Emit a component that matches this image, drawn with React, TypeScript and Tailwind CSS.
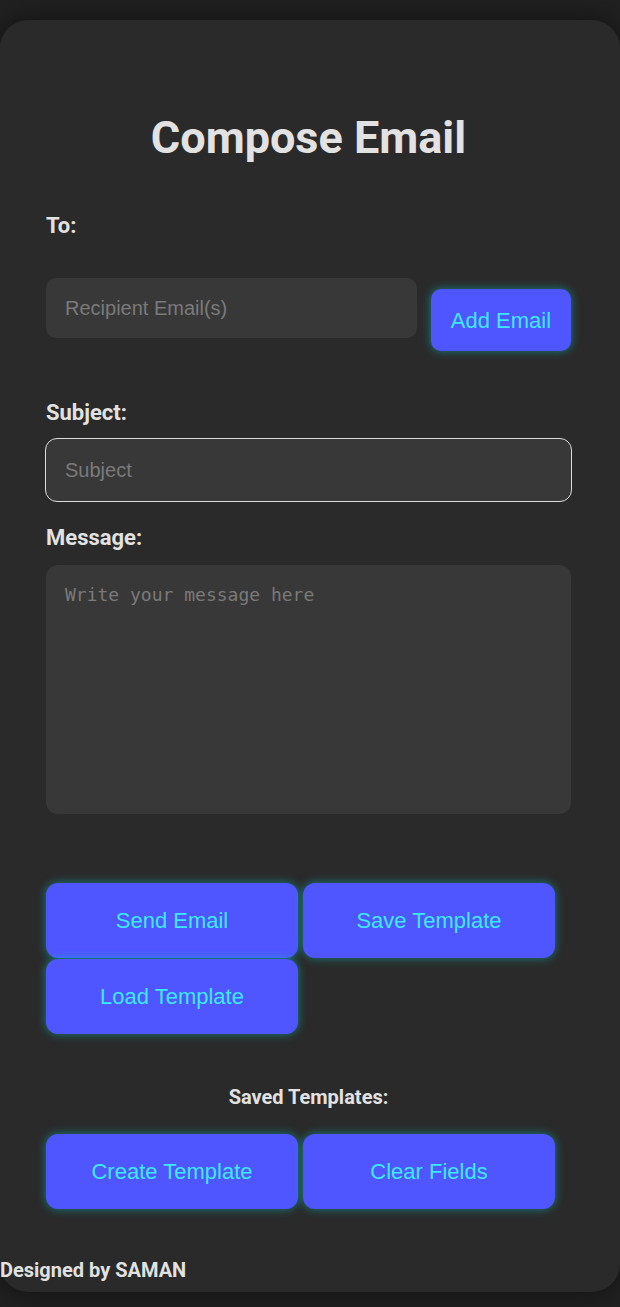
import { useState } from 'react'

const btn =
  "w-[252px] h-[75px] rounded-[12px] bg-[#4f55ff] text-[#3de9f5] text-[22px] font-['Liberation_Sans',Arial,sans-serif] shadow-[0_0_10px_rgba(0,230,230,0.45)]"

export default function App() {
  const [to, setTo] = useState('')
  const [subject, setSubject] = useState('')
  const [message, setMessage] = useState('')

  return (
    <div className="min-h-[1307px] bg-[#212121] pt-[20px] overflow-hidden">
      <div className="flex flex-col rounded-[28px] bg-[#2a2a2a] pt-[91px] pl-[46px] pr-[49px] pb-[10px] shadow-[0_0_30px_rgba(0,0,0,0.5)] font-['Roboto',sans-serif] text-[#e2e2e2]">
        <h1 className="text-center text-[45px] leading-[54px] font-bold">Compose Email</h1>

        {/* recipients */}
        <label className="mt-[48px] text-[22px] leading-[26px] font-bold">To:</label>
        <div className="mt-[39px] flex items-start gap-[14px] h-[73px]">
          <input
            value={to}
            onChange={e => setTo(e.target.value)}
            placeholder="Recipient Email(s)"
            className="w-[371px] h-[60px] rounded-[10px] bg-[#383838] px-[19px] text-[20px] text-[#ddd] placeholder:text-[#7a7a7a] outline-none font-['Liberation_Sans',Arial,sans-serif]"
          />
          <button className="mt-[11px] w-[140px] h-[62px] rounded-[10px] bg-[#4f55ff] text-[#3de9f5] text-[22px] font-['Liberation_Sans',Arial,sans-serif] shadow-[0_0_10px_rgba(0,230,230,0.45)]">
            Add Email
          </button>
        </div>

        {/* subject */}
        <label className="mt-[49px] text-[22px] leading-[26px] font-bold">Subject:</label>
        <input
          value={subject}
          onChange={e => setSubject(e.target.value)}
          placeholder="Subject"
          className="mt-[12px] -mx-[1px] h-[64px] rounded-[12px] border border-[#dcdcdc] bg-[#383838] px-[19px] text-[20px] text-[#ddd] placeholder:text-[#7a7a7a] outline-none font-['Liberation_Sans',Arial,sans-serif]"
        />

        {/* message */}
        <label className="mt-[23px] text-[22px] leading-[26px] font-bold">Message:</label>
        <textarea
          value={message}
          onChange={e => setMessage(e.target.value)}
          placeholder="Write your message here"
          className="mt-[14px] h-[249px] resize-none rounded-[12px] bg-[#383838] px-[19px] py-[19px] text-[18px] leading-[22px] text-[#ddd] placeholder:text-[#7a7a7a] outline-none font-['DejaVu_Sans_Mono',monospace]"
        />

        <div className="mt-[69px] flex flex-wrap gap-x-[5px] gap-y-[1px]">
          <button className={btn}>Send Email</button>
          <button className={btn}>Save Template</button>
          <button className={btn}>Load Template</button>
        </div>

        <h3 className="mt-[51px] text-center text-[20px] leading-[24px] font-bold">Saved Templates:</h3>
        <div className="mt-[25px] flex gap-[5px]">
          <button className={btn}>Create Template</button>
          <button className={btn}>Clear Fields</button>
        </div>

        <p className="mt-[49px] -ml-[46px] text-[20px] leading-[24px] font-bold">Designed by SAMAN</p>
      </div>
    </div>
  )
}
